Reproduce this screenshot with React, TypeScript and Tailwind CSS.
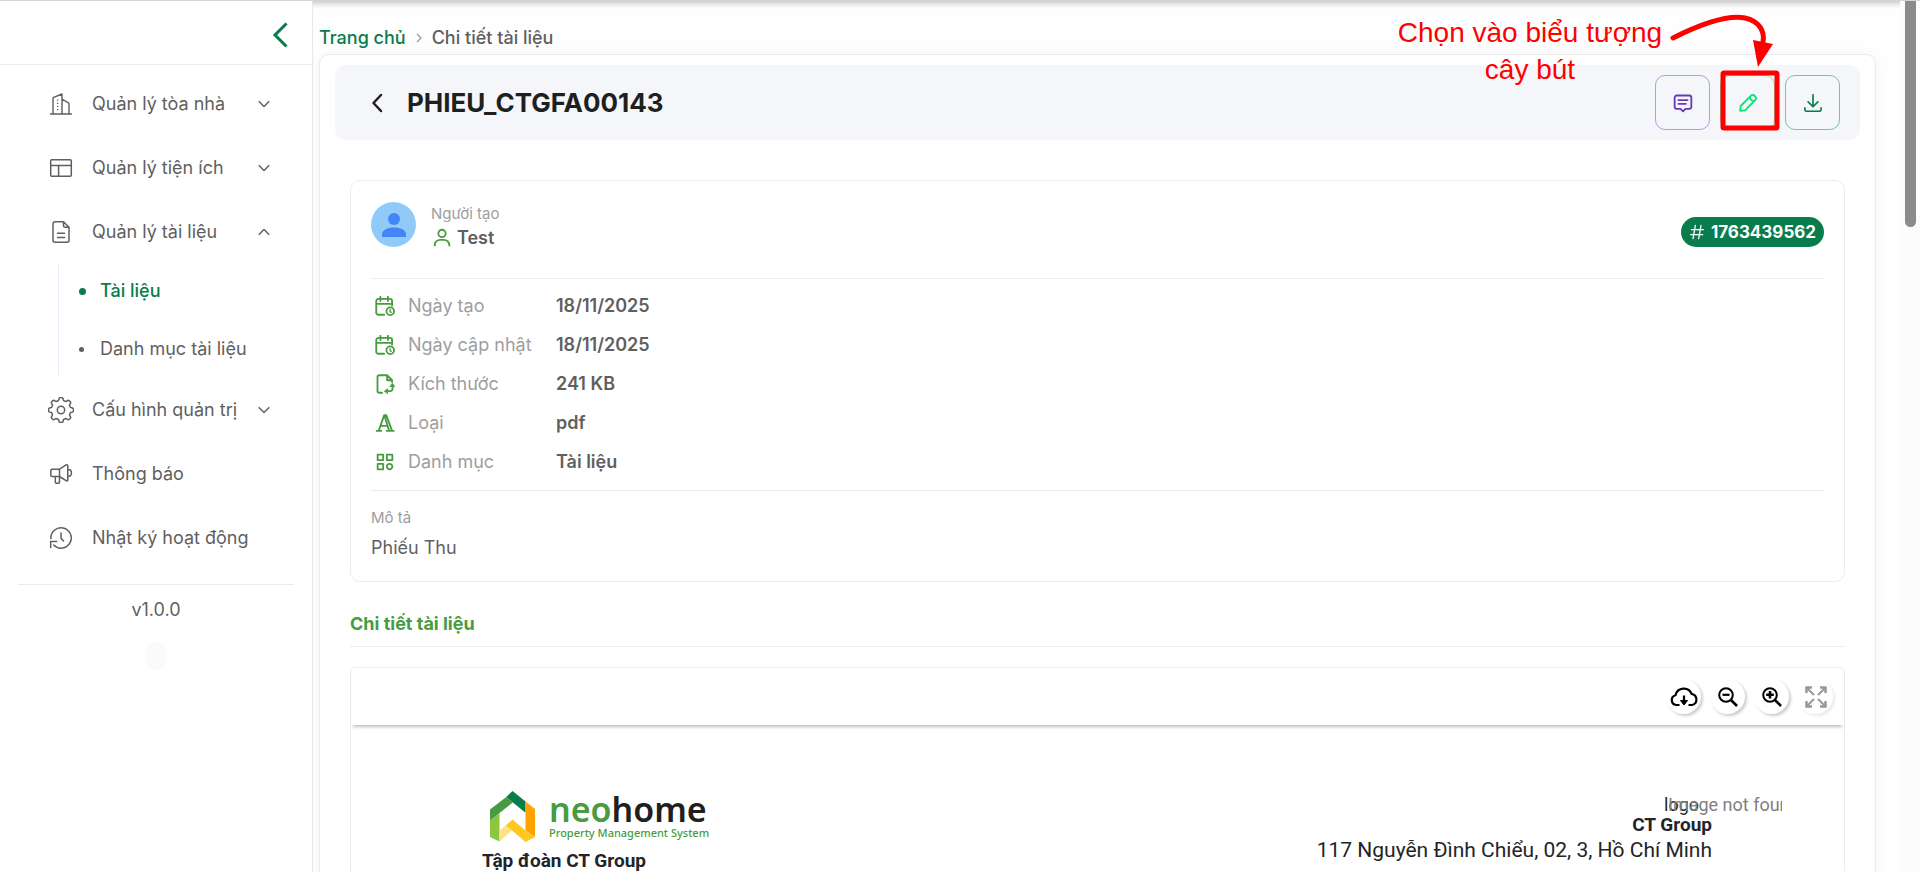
import type { ReactNode } from "react";
import { BiCategory, BiUser } from "react-icons/bi";

interface IconProps {
  className?: string;
  children: ReactNode;
}

function Icon({ className = "size-6", children }: IconProps) {
  return (
    <svg
      viewBox="0 0 24 24"
      fill="none"
      stroke="currentColor"
      strokeLinecap="round"
      strokeLinejoin="round"
      className={`shrink-0 ${className}`}
      aria-hidden="true"
    >
      {children}
    </svg>
  );
}

// Outline of an eight-lobed gear around (12, 12)
const gearPath =
  Array.from({ length: 160 }, (_, i) => {
    const angle = (i / 160) * Math.PI * 2;
    const radius = 10.2 + 1.3 * Math.tanh(2.4 * Math.cos(angle * 8));
    const x = 12 + radius * Math.sin(angle);
    const y = 12 - radius * Math.cos(angle);
    return `${i === 0 ? "M" : "L"}${x.toFixed(2)} ${y.toFixed(2)}`;
  }).join("") + "Z";

const BuildingIcon = () => (
  <Icon>
    <path strokeWidth="1.4" d="M1.5 22h21M4 22V6.3a1 1 0 0 1 .6-.9L13 2v20M13 7l6.4 3.8a1 1 0 0 1 .6.9V22" />
    <path strokeWidth="1.3" strokeDasharray="1.2 2" strokeLinecap="butt" d="M8.6 7.5v12" />
  </Icon>
);

const LayoutIcon = () => (
  <Icon>
    <rect x="1.7" y="3.7" width="20.6" height="16.6" rx="1" strokeWidth="1.5" />
    <path strokeWidth="1.5" d="M1.7 9.5h20.6M9.6 9.5v10.8" />
  </Icon>
);

const DocumentIcon = () => (
  <Icon>
    <path
      strokeWidth="1.5"
      d="M14.5 1.8H6a2 2 0 0 0-2 2v16.4a2 2 0 0 0 2 2h12a2 2 0 0 0 2-2V7.3zM14.5 1.8v3.5a2 2 0 0 0 2 2H20M8.5 13.3h7M8.5 17.5h7"
    />
  </Icon>
);

const GearIcon = () => (
  <Icon className="size-[26px]">
    <path strokeWidth="1.4" d={gearPath} />
    <circle cx="12" cy="12" r="3.4" strokeWidth="1.4" />
  </Icon>
);

const MegaphoneIcon = () => (
  <Icon>
    <path
      strokeWidth="1.5"
      d="M10.5 7.2H3a1.2 1.2 0 0 0-1.2 1.2v4.900a1.200 1.200 0 0 0 1.200 1.200h7.500zM10.500 7.200l6.600-4.300c.8-.5 1.700 0 1.700.9v14c0 .9-.9 1.400-1.700.9l-6.600-4.200M18.800 7.500h.6c2 0 3 1.600 3 3.400s-1 3.400-3 3.400h-.6M6.300 14.500v5.600a1.200 1.200 0 0 0 1.200 1.200h1.800a1.200 1.200 0 0 0 1.200-1.200v-5.600"
    />
  </Icon>
);

const HistoryIcon = () => (
  <Icon>
    <path strokeWidth="1.5" d="M1.9 12.8A10.2 10.2 0 1 1 4.700 19M1.7 21.500v-6h6M12 7v5.200l2.500 2.800" />
  </Icon>
);

const Chevron = ({ up = false }: { up?: boolean }) => (
  <svg viewBox="0 0 12 8" fill="none" stroke="currentColor" strokeWidth="1.4" className="w-3 h-2" aria-hidden="true">
    <path d={up ? "M.7 6.8 6 1.5l5.300 5.300" : "M.7 1.2 6 6.500l5.300-5.300"} />
  </svg>
);

const CalendarClockIcon = () => (
  <Icon className="size-5">
    <path
      strokeWidth="2.2"
      d="M11 22.500H4A2.500 2.500 0 0 1 1.500 20V6A2.500 2.500 0 0 1 4 3.500h14A2.500 2.500 0 0 1 20.500 6v5.500M6.500 1v5M15.500 1v5M1.500 9.500h19"
    />
    <circle cx="18.300" cy="18.300" r="4.600" strokeWidth="2.2" />
    <path strokeWidth="1.6" d="M18.100 16.300v2.400l1.400 1" />
  </Icon>
);

const FileSyncIcon = () => (
  <Icon className="size-5">
    <path strokeWidth="2.2" d="M8.500 22.500H5a2 2 0 0 1-2-2v-17a2 2 0 0 1 2-2h9.500l6 6v2M14.500 1.800v5.700h5.700" />
    <path strokeWidth="2.2" d="M21 13.500V18a2.500 2.500 0 0 1-2.500 2.500H13" />
    <path strokeWidth="1" fill="currentColor" d="m21 11.500 2.700 3.500h-5.400zM11.500 20.500l3.500-2.700v5.400z" />
  </Icon>
);

const TypeIcon = () => (
  <Icon className="size-5">
    <path strokeWidth="2.2" d="M4.500 21.500 11 2.500h2.500l7 19M6.500 15.500h8M11.500 3.500l5.500 18M2 21.500h5.500M14 21.500h8.500" />
  </Icon>
);

const SlantedHashIcon = () => (
  <Icon className="size-4">
    <path strokeWidth="1.9" d="M9.500 2 6 22M18 2l-3.500 20M3.500 8.500h18M2.500 16h18" />
  </Icon>
);

const subItems = [
  { label: "Tài liệu", active: true },
  { label: "Danh mục tài liệu", active: false },
];

const menu = [
  { label: "Quản lý tòa nhà", icon: <BuildingIcon />, expandable: true },
  { label: "Quản lý tiện ích", icon: <LayoutIcon />, expandable: true },
  { label: "Quản lý tài liệu", icon: <DocumentIcon />, expandable: true, open: true },
  { label: "Cấu hình quản trị", icon: <GearIcon />, expandable: true },
  { label: "Thông báo", icon: <MegaphoneIcon /> },
  { label: "Nhật ký hoạt động", icon: <HistoryIcon /> },
];

const details = [
  { label: "Ngày tạo", value: "18/11/2025", icon: <CalendarClockIcon /> },
  { label: "Ngày cập nhật", value: "18/11/2025", icon: <CalendarClockIcon /> },
  { label: "Kích thước", value: "241 KB", icon: <FileSyncIcon /> },
  { label: "Loại", value: "pdf", icon: <TypeIcon /> },
  { label: "Danh mục", value: "Tài liệu", icon: <BiCategory className="size-[22px]" /> },
];

function Sidebar() {
  return (
    <aside className="w-[313px] shrink-0 border-r border-[#e8e8e8] bg-white z-10">
      <div className="h-16 flex items-center justify-end pr-6 pt-1 border-b border-[#ebebeb]">
        <button type="button" aria-label="Thu gọn" className="text-[#087c4b]">
          <svg viewBox="0 0 16 26" fill="none" stroke="currentColor" strokeWidth="3" className="w-4 h-[26px]">
            <path d="M14.500 1.500 3 13l11.500 11.500" />
          </svg>
        </button>
      </div>
      <nav className="pt-[7px]">
        <ul>
          {menu.map((item) => (
            <li key={item.label}>
              <a href="#" className="h-16 flex items-center pl-12 pr-[42px]">
                <span className="w-[26px] flex justify-center">{item.icon}</span>
                <span className="ml-[18px] flex-1 whitespace-nowrap">{item.label}</span>
                {item.expandable && <Chevron up={item.open} />}
              </a>
              {item.open && (
                <ul className="ml-[58px] mb-0.5 border-l border-[#e6ebfa] flex flex-col gap-1">
                  {subItems.map((sub) => (
                    <li key={sub.label}>
                      <a
                        href="#"
                        className={`h-[54px] flex items-center pl-5 ${sub.active ? "text-[#087c4b] font-medium" : ""}`}
                      >
                        <span className="w-[21px]">
                          <span className={`block rounded-full bg-current ${sub.active ? "size-[7px]" : "size-[5px]"}`} />
                        </span>
                        {sub.label}
                      </a>
                    </li>
                  ))}
                </ul>
              )}
            </li>
          ))}
        </ul>
      </nav>
      <div className="mx-[18px] mt-3.5 pt-[11px] border-t border-[#ebebeb] flex flex-col items-center">
        <p>v1.0.0</p>
        <span className="mt-[17px] w-5 h-[30px] rounded-full bg-[#fafafa]" />
      </div>
    </aside>
  );
}

function TitleBar() {
  return (
    <header className="h-[75px] rounded-[10px] bg-[#f4f6fa] flex items-center justify-between pl-8 pr-5">
      <div className="flex items-center gap-5 text-[#1f1f1f]">
        <button type="button" aria-label="Quay lại" className="p-1">
          <svg
            viewBox="0 0 12 20"
            fill="none"
            stroke="currentColor"
            strokeWidth="2.5"
            strokeLinecap="round"
            strokeLinejoin="round"
            className="w-3 h-5"
          >
            <path d="M10 2 2.500 10 10 18" />
          </svg>
        </button>
        <h1 className="text-[26px] leading-8 font-bold">PHIEU_CTGFA00143</h1>
      </div>
      <div className="flex gap-2.5">
        <button
          type="button"
          aria-label="Ghi chú"
          className="size-[55px] rounded-[10px] border border-[#b39ddb] text-[#673ab7] flex items-center justify-center"
        >
          <Icon className="size-5">
            <path
              strokeWidth="2.2"
              d="M4.500 3h15A2.500 2.500 0 0 1 22 5.500v11a2.500 2.500 0 0 1-2.500 2.500H15l-3 3-3-3H4.500A2.500 2.500 0 0 1 2 16.500v-11A2.500 2.500 0 0 1 4.500 3zM6.500 8.500h11M6.500 13h9"
            />
          </Icon>
        </button>
        <button
          type="button"
          aria-label="Chỉnh sửa"
          className="size-[55px] rounded-[10px] border border-[#84dcae] text-[#00e676] flex items-center justify-center"
        >
          <Icon className="size-[18px]">
            <path
              strokeWidth="2.4"
              d="m1.500 22.500.8-6.500L16 2.300a3.200 3.200 0 0 1 4.500 0l1.200 1.200a3.200 3.200 0 0 1 0 4.500L8 21.700zM14.500 4.500l1.500 3.500 3.500 1.500"
            />
          </Icon>
        </button>
        <button
          type="button"
          aria-label="Tải xuống"
          className="size-[55px] rounded-[10px] border border-[#80bda3] text-[#087c4b] flex items-center justify-center"
        >
          <Icon className="size-[18px]">
            <path
              strokeWidth="2.2"
              d="M12 1v15M5.500 10.500 12 17l6.500-6.500M1.200 18.500v2A2.500 2.500 0 0 0 3.700 23h16.600a2.500 2.500 0 0 0 2.500-2.500v-2"
            />
          </Icon>
        </button>
      </div>
    </header>
  );
}

function InfoCard() {
  return (
    <section className="border border-[#ebebeb] rounded-[10px] px-5 pt-[21px] pb-[19px]">
      <div className="flex items-start justify-between pb-7 border-b border-[#ebebeb]">
        <div className="flex gap-[15px]">
          <span className="size-[45px] rounded-full bg-[#90caf9] flex items-center justify-center">
            <svg viewBox="0 0 24 24" fill="#4285f4" className="size-6" aria-hidden="true">
              <circle cx="12" cy="6" r="6" />
              <path d="M0 24v-3c0-3.800 5.500-6.500 12-6.500S24 17.200 24 21v3z" />
            </svg>
          </span>
          <div className="leading-6">
            <p className="text-[15px] leading-6 text-[#9e9e9e]">Người tạo</p>
            <p className="flex items-center gap-1 font-semibold leading-6">
              <BiUser className="size-[22px] text-[#479c42]" />
              Test
            </p>
          </div>
        </div>
        <span className="mt-[15px] h-[30px] rounded-full bg-[#087c4b] text-white text-[17px] font-bold flex items-center gap-1.5 px-2">
          <SlantedHashIcon />
          1763439562
        </span>
      </div>

      <dl className="pt-[7px] pb-[9px] border-b border-[#ebebeb]">
        {details.map((row) => (
          <div key={row.label} className="h-[39px] flex items-center">
            <span className="w-[27px] flex justify-center text-[#479c42]">{row.icon}</span>
            <dt className="ml-2.5 w-[148px] text-[#9e9e9e]">{row.label}</dt>
            <dd className="font-semibold">{row.value}</dd>
          </div>
        ))}
      </dl>

      <div className="pt-[15px]">
        <p className="text-[15px] leading-6 text-[#9e9e9e]">Mô tả</p>
        <p className="mt-1">Phiếu Thu</p>
      </div>
    </section>
  );
}

const NeohomeLogo = () => (
  <div className="flex items-start gap-[14px] pl-2">
    <svg viewBox="0 0 45 51" className="w-[45px] h-[51px]" aria-hidden="true">
      <path fill="#8cc63f" d="M0 29.500 9.500 22v28.500L0 46z" />
      <path fill="#479c42" d="M0 18.500 16.300 6l6.500 5.500L9.500 22 0 29.500z" />
      <path fill="#087c4b" d="M22.500 0 35.500 10.500v11.300L16.300 6z" />
      <path fill="#ffa300" d="m35.500 10.500 9.500 7.500v28l-9.500-6.500z" />
      <path fill="#ffe082" d="m9.500 39.500 6.500-5.300 6 5L9.500 50.500z" />
      <path fill="#ffc720" d="m16 34.200 6.500-5.700 13 11L45 46l-9.500 5z" />
    </svg>
    <div className="font-['Noto_Sans'] text-[#479c42]">
      <p className="text-[34px] leading-9 font-semibold">
        neo<span className="text-[#1f1f1f]">home</span>
      </p>
      <p className="text-[11px] leading-3 font-medium">Property Management System</p>
    </div>
  </div>
);

interface ViewerButtonProps {
  label: string;
  disabled?: boolean;
  children: ReactNode;
}

function ViewerButton({ label, disabled = false, children }: ViewerButtonProps) {
  return (
    <button
      type="button"
      aria-label={label}
      disabled={disabled}
      className="size-[35px] rounded-full bg-white text-black shadow-[2px_2px_3px_#00000033] flex items-center justify-center disabled:opacity-40"
    >
      {children}
    </button>
  );
}

function DocumentViewer() {
  return (
    <section className="border border-[#ebebeb] rounded-[5px] font-[Roboto] text-[#212529]">
      <div className="h-[57px] pr-[11px] flex items-center justify-end gap-[9px] shadow-[0_4px_3px_-2px_#00000040]">
        <ViewerButton label="Tải xuống">
          <svg viewBox="0 0 28 20" fill="none" stroke="currentColor" strokeWidth="2.2" strokeLinejoin="round" className="w-7 h-5">
            <path d="M9.500 18H6.300a5 5 0 0 1-.8-9.800A8.500 8.500 0 0 1 21.700 7a5.600 5.600 0 0 1 .3 11h-3.500" />
            <path d="M14 8.500v8" />
            <path fill="currentColor" strokeWidth="1" d="M10.500 13.500h7L14 18z" />
          </svg>
        </ViewerButton>
        <ViewerButton label="Thu nhỏ">
          <svg viewBox="0 0 20 20" fill="none" stroke="currentColor" strokeWidth="2" className="size-5">
            <circle cx="8" cy="8" r="6.800" />
            <path d="M4.500 7.800h7" strokeWidth="2.2" />
            <path d="m13 13 6 6" strokeWidth="2.6" />
          </svg>
        </ViewerButton>
        <ViewerButton label="Phóng to">
          <svg viewBox="0 0 20 20" fill="none" stroke="currentColor" strokeWidth="2" className="size-5">
            <circle cx="8" cy="8" r="6.800" />
            <path d="M4.200 7.800h7.600M8 4v7.600" strokeWidth="2.6" />
            <path d="m13 13 6 6" strokeWidth="2.6" />
          </svg>
        </ViewerButton>
        <ViewerButton label="Vừa trang" disabled>
          <svg viewBox="0 0 22 22" fill="none" stroke="currentColor" strokeWidth="2" className="size-[22px]">
            <path d="m2 2 7 7M20 2l-7 7M2 20l7-7M20 20l-7-7" />
            <path strokeWidth="2.5" d="M1.500 7V1.500H7M15 1.500h5.500V7M1.500 15v5.500H7M20.500 15v5.500H15" />
          </svg>
        </ViewerButton>
      </div>

      <div className="pt-[66px] pl-[131px] pr-[132px] flex justify-between">
        <div>
          <NeohomeLogo />
          <p className="mt-[7px] text-[19px] leading-6 font-bold">Tập đoàn CT Group</p>
        </div>
        <div className="flex flex-col items-end">
          <div className="relative w-12 h-[22px] text-lg leading-7">
            logo
            <span className="absolute left-1 top-0 w-[114px] overflow-hidden whitespace-nowrap text-[#808080]">
              Image not found
            </span>
          </div>
          <p className="text-[19px] leading-6 font-bold">CT Group</p>
          <p className="text-[21px] leading-[26px]">117 Nguyễn Đình Chiểu, 02, 3, Hồ Chí Minh</p>
        </div>
      </div>
    </section>
  );
}

// Red hand-drawn hint pointing at the edit button
function EditHint() {
  return (
    <div className="absolute top-0 right-[115px] z-20 flex pointer-events-none text-[#ff0000]">
      <p className="pt-[13px] w-[270px] text-center font-['Liberation_Sans'] text-[28px] leading-[37px]">
        Chọn vào biểu tượng cây bút
      </p>
      <svg viewBox="0 0 120 140" fill="none" stroke="currentColor" className="w-[120px] h-[140px]" aria-hidden="true">
        <path strokeWidth="5" strokeLinecap="round" d="M8 37C38 22 64 14 80 17c14 3 20 13 18 24" />
        <path fill="currentColor" stroke="none" d="m88 39 20 4-15 23z" />
        <rect x="58" y="72" width="54" height="55" rx="1" strokeWidth="5" />
      </svg>
    </div>
  );
}

export default function App() {
  return (
    <div className="h-screen overflow-hidden flex border-t border-[#d6d6d6] bg-white font-[Inter] text-lg leading-7 text-[#5f5f5f]">
      <Sidebar />
      <main className="relative flex-1 min-w-0 pl-1.5 pr-6 pt-[23px] bg-[#fefefe] shadow-[inset_0_8px_6px_-6px_#00000040]">
        <nav aria-label="Breadcrumb" className="flex items-center gap-2.5 font-medium">
          <a href="#" className="text-[#087c4b]">
            Trang chủ
          </a>
          <svg viewBox="0 0 6 10" fill="none" stroke="#9e9e9e" strokeWidth="1.3" className="w-1.5 h-2.5" aria-hidden="true">
            <path d="m1 1 4 4-4 4" />
          </svg>
          <span>Chi tiết tài liệu</span>
        </nav>
        <div className="mt-0.5 min-h-full rounded-t-[10px] border border-[#ebebeb] bg-white px-[15px] pt-2.5 shadow-[0_0_12px_#0000000a]">
          <TitleBar />
          <div className="px-[15px] pt-10">
            <InfoCard />
            <h2 className="mt-7 pb-2 border-b border-[#ebebeb] font-bold text-[#479c42]">Chi tiết tài liệu</h2>
            <div className="mt-5">
              <DocumentViewer />
            </div>
          </div>
        </div>
        <EditHint />
      </main>
      <div className="w-5 shrink-0 bg-[#fcfcfc] pl-[5px]">
        <div className="w-[11px] h-[226px] rounded-b-full bg-[#8b8b8b]" />
      </div>
    </div>
  );
}
